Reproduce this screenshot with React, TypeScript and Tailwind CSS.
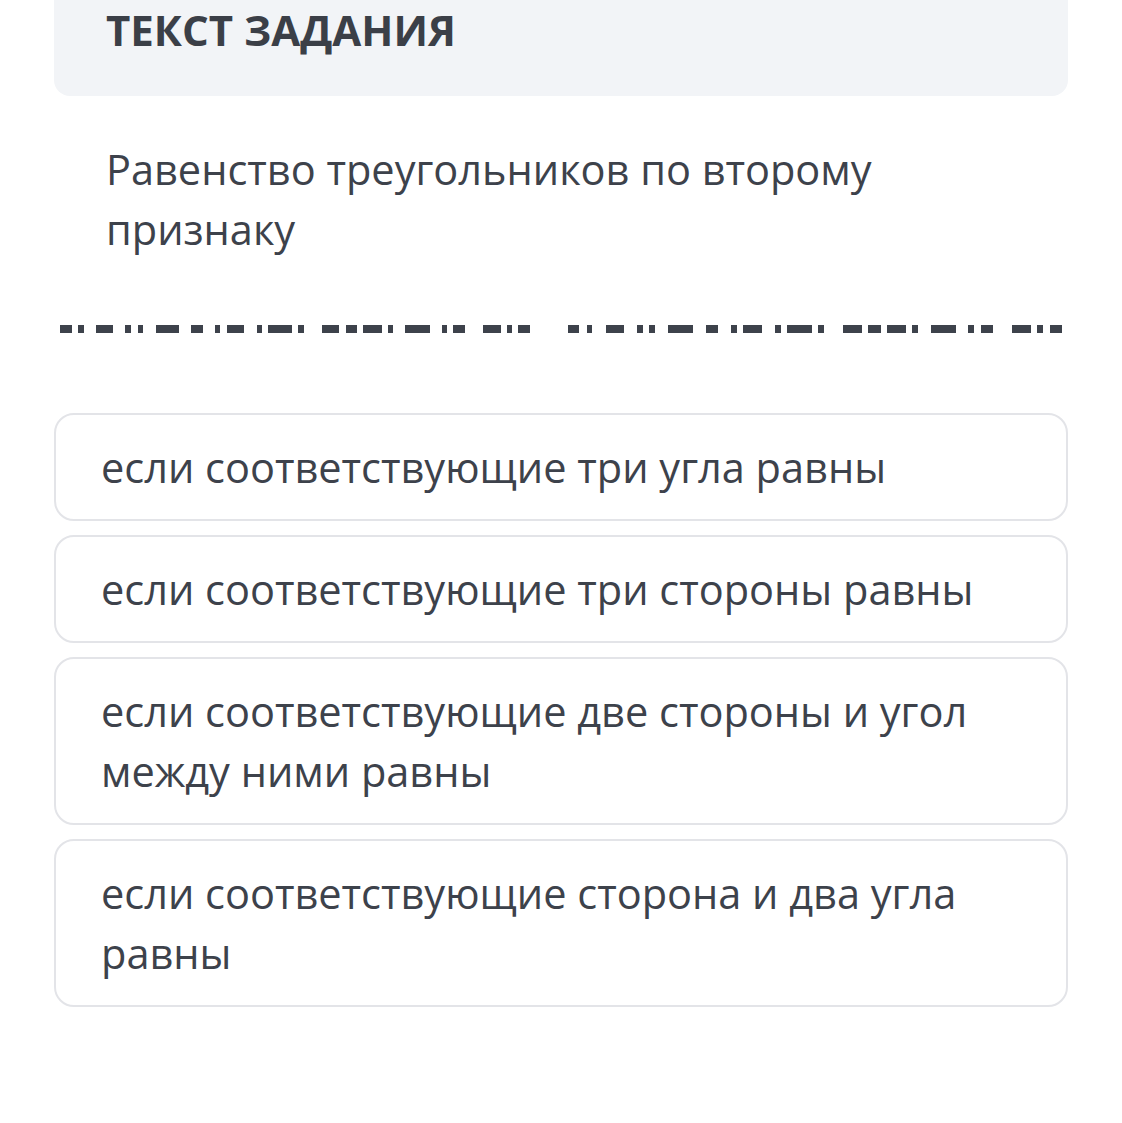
import React from "react";

// dashes of the divider line: [left, right]
const dashes: [number, number][] = [
  [60, 72], [78, 84], [96, 113], [125, 131], [138, 143], [156, 179], [191, 203],
  [215, 220], [227, 244], [257, 262], [268, 292], [298, 304], [322, 339], [346, 357],
  [363, 382], [388, 393], [405, 430], [442, 447], [453, 465], [483, 501], [507, 512],
  [518, 530],
  [568, 579], [587, 592], [606, 624], [637, 643], [649, 655], [668, 693], [706, 718],
  [731, 737], [743, 762], [775, 781], [787, 812], [818, 824], [843, 862], [868, 881],
  [887, 906], [912, 918], [931, 956], [968, 974], [981, 993], [1012, 1031], [1037, 1043],
  [1050, 1062],
];

const options = [
  "если соответствующие три угла равны",
  "если соответствующие три стороны равны",
  "если соответствующие две стороны и угол между ними равны",
  "если соответствующие сторона и два угла равны",
];

export default function App() {
  return (
    <div
      className="w-[1122px] h-[1123px] bg-white text-[#3d424b] overflow-hidden"
      style={{ fontFamily: '"Open Sans", "Noto Sans", sans-serif' }}
    >
      <div className="mx-[54px] h-[96px] bg-[#f2f4f7] rounded-b-[16px] pl-[52px] flex items-end pb-[45px]">
        <h1 className="text-[42px] font-bold leading-none text-[#3b3f47]">
          ТЕКСТ ЗАДАНИЯ
        </h1>
      </div>

      <p className="mt-[43px] ml-[106px] w-[900px] text-[41.5px] leading-[60px]">
        Равенство треугольников по второму признаку
      </p>

      <svg className="mt-[66px] block" width="1122" height="8" viewBox="0 0 1122 8">
        {dashes.map(([a, b], i) => (
          <rect key={i} x={a} y={0} width={b - a} height={8} fill="#3d424b" />
        ))}
      </svg>

      <div className="mt-[80px] mx-[54px] flex flex-col gap-[14px]">
        {options.map((o) => (
          <div
            key={o}
            className="border-2 border-[#e3e4e8] rounded-[20px] pl-[45px] pr-[40px] py-[22px] text-[41.5px] leading-[60px]"
          >
            {o}
          </div>
        ))}
      </div>
    </div>
  );
}
